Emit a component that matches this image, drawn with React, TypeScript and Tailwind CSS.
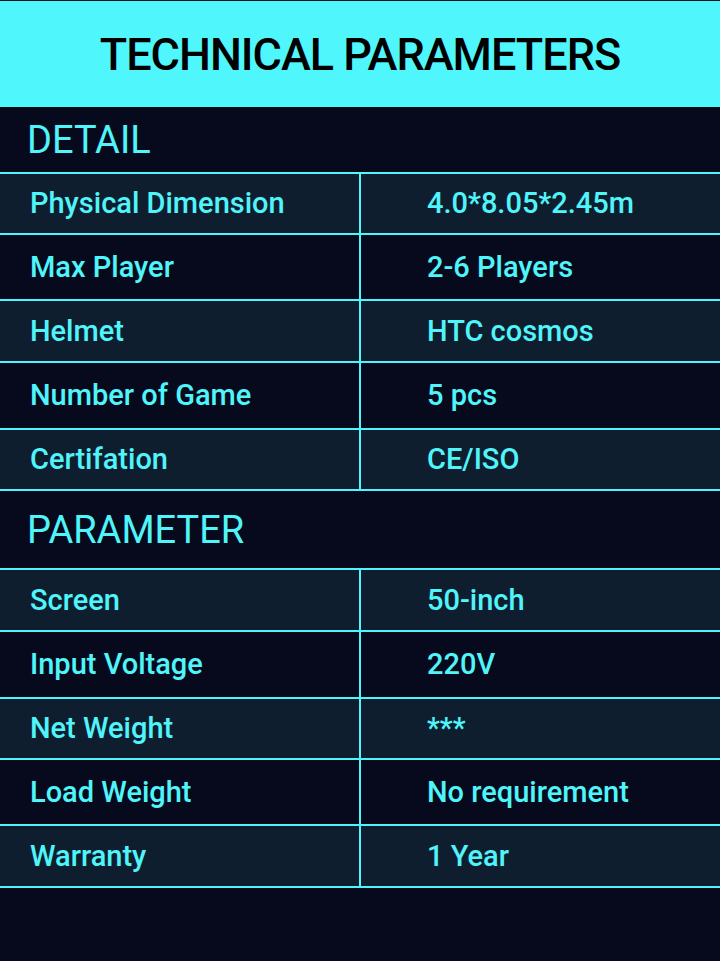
import React from "react";

type Row = { k: string; v: string; h: string; light: boolean };

const detail: Row[] = [
  { k: "Physical Dimension", v: "4.0*8.05*2.45m", h: "h-[59px]", light: true },
  { k: "Max Player", v: "2-6 Players", h: "h-[64px]", light: false },
  { k: "Helmet", v: "HTC cosmos", h: "h-[60px]", light: true },
  { k: "Number of Game", v: "5 pcs", h: "h-[65px]", light: false },
  { k: "Certifation", v: "CE/ISO", h: "h-[59px]", light: true },
];

const param: Row[] = [
  { k: "Screen", v: "50-inch", h: "h-[60px]", light: true },
  { k: "Input Voltage", v: "220V", h: "h-[65px]", light: false },
  { k: "Net Weight", v: "***", h: "h-[59px]", light: true },
  { k: "Load Weight", v: "No requirement", h: "h-[64px]", light: false },
  { k: "Warranty", v: "1 Year", h: "h-[60px]", light: true },
];

function Table({ rows }: { rows: Row[] }) {
  return (
    <div className="border-b-2 border-[#4ff5fa]">
      {rows.map((r) => (
        <div
          key={r.k}
          className={`flex border-t-2 border-[#4ff5fa] box-content ${r.h} ${r.light ? "bg-[#0f1e2f]" : "bg-[#070a1c]"}`}
        >
          <div className="w-[361px] border-r-2 border-[#4ff5fa] flex items-center pl-[30px] text-[29px] font-medium leading-none">
            {r.k}
          </div>
          <div className="flex-1 flex items-center pl-[66px] text-[29px] font-medium leading-none">{r.v}</div>
        </div>
      ))}
    </div>
  );
}

export default function App() {
  return (
    <div
      className="w-[720px] h-[961px] bg-[#070a1c] text-[#4ff5fa] flex flex-col overflow-hidden"
      style={{ fontFamily: "Roboto, Lato, sans-serif" }}
    >
      <div className="h-[107px] bg-[#4ff6fb] border-t border-[#0a1020] flex items-center justify-center text-black text-[45px] font-medium leading-none tracking-[-1px]">
        TECHNICAL PARAMETERS
      </div>
      <div className="h-[65px] flex items-center pl-[27px] text-[38px] leading-none">DETAIL</div>
      <Table rows={detail} />
      <div className="h-[77px] flex items-center pl-[27px] text-[38px] leading-none">PARAMETER</div>
      <Table rows={param} />
    </div>
  );
}
